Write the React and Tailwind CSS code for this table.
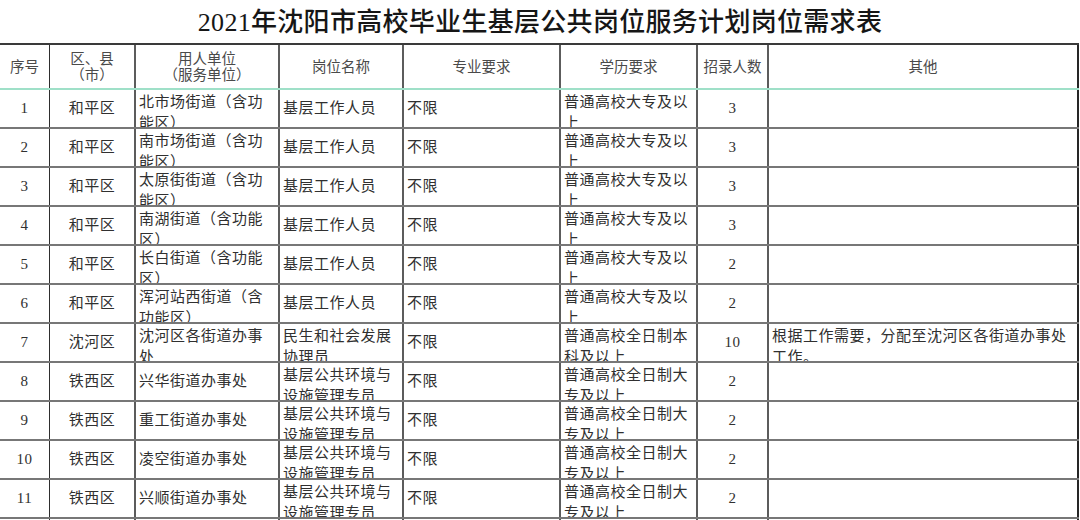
const COLS = 'grid grid-cols-[50px_86px_144px_124px_157px_137px_71px_310px]';
const FONT = "font-['Liberation_Serif','Noto_Sans_CJK_SC',serif]";

const HEAD = [
  ['序号'],
  ['区、县', '（市）'],
  ['用人单位', '（服务单位）'],
  ['岗位名称'],
  ['专业要求'],
  ['学历要求'],
  ['招录人数'],
  ['其他'],
];

const ROWS = [
  ['1', '和平区', ['北市场街道（含功', '能区）'], ['基层工作人员'], ['普通高校大专及以', '上'], '3', []],
  ['2', '和平区', ['南市场街道（含功', '能区）'], ['基层工作人员'], ['普通高校大专及以', '上'], '3', []],
  ['3', '和平区', ['太原街街道（含功', '能区）'], ['基层工作人员'], ['普通高校大专及以', '上'], '3', []],
  ['4', '和平区', ['南湖街道（含功能', '区）'], ['基层工作人员'], ['普通高校大专及以', '上'], '3', []],
  ['5', '和平区', ['长白街道（含功能', '区）'], ['基层工作人员'], ['普通高校大专及以', '上'], '2', []],
  ['6', '和平区', ['浑河站西街道（含', '功能区）'], ['基层工作人员'], ['普通高校大专及以', '上'], '2', []],
  ['7', '沈河区', ['沈河区各街道办事', '处'], ['民生和社会发展', '协理员'], ['普通高校全日制本', '科及以上'], '10', ['根据工作需要，分配至沈河区各街道办事处', '工作。']],
  ['8', '铁西区', ['兴华街道办事处'], ['基层公共环境与', '设施管理专员'], ['普通高校全日制大', '专及以上'], '2', []],
  ['9', '铁西区', ['重工街道办事处'], ['基层公共环境与', '设施管理专员'], ['普通高校全日制大', '专及以上'], '2', []],
  ['10', '铁西区', ['凌空街道办事处'], ['基层公共环境与', '设施管理专员'], ['普通高校全日制大', '专及以上'], '2', []],
  ['11', '铁西区', ['兴顺街道办事处'], ['基层公共环境与', '设施管理专员'], ['普通高校全日制大', '专及以上'], '2', []],
];

function edge(i) {
  if (i === 0) return 'border-r border-r-[#2e2e2e]';
  if (i === 7) return 'border-r-2 border-r-[#262626]';
  return 'border-r-2 border-r-[#5c5c5c]';
}

// excel-style cell: wrapped text is clipped by the row line below
function Cell({ i, lines, center }) {
  const multi = lines.length > 1;
  return (
    <div
      className={`flex overflow-hidden px-[3px] ${edge(i)} ${multi ? 'items-start pt-[2px]' : 'items-center'} ${center ? 'justify-center text-center' : 'justify-start'}`}
    >
      <div className="leading-[21px] tracking-[0.5px] whitespace-nowrap">
        {lines.map((l, k) => (
          <div key={k}>{l}</div>
        ))}
      </div>
    </div>
  );
}

export default function App() {
  return (
    <div className={`h-[520px] w-[1080px] overflow-hidden bg-white text-[#303030] ${FONT}`}>
      <h1 className="flex h-[43px] items-center justify-center pt-[1px] text-[26px] font-medium tracking-[0.3px] text-[#161616]">
        2021年沈阳市高校毕业生基层公共岗位服务计划岗位需求表
      </h1>

      <div className="w-[1079px] border-t-2 border-t-[#3a3a3a]">
        {/* header */}
        <div className={`${COLS} h-[45px] border-b-2 border-b-[#9fe0c8] text-[14.5px] text-[#4a4a4a]`}>
          {HEAD.map((h, i) => (
            <div key={i} className={`flex items-center justify-center text-center leading-[16px] ${edge(i)}`}>
              <div>
                {h.map((l, k) => (
                  <div key={k}>{l}</div>
                ))}
              </div>
            </div>
          ))}
        </div>

        {ROWS.map((r) => (
          <div key={r[0]} className={`${COLS} h-[39px] border-b-2 border-b-[#777] text-[15px]`}>
            <Cell i={0} lines={[r[0]]} center />
            <Cell i={1} lines={[r[1]]} center />
            <Cell i={2} lines={r[2]} />
            <Cell i={3} lines={r[3]} />
            <Cell i={4} lines={['不限']} />
            <Cell i={5} lines={r[4]} />
            <Cell i={6} lines={[r[5]]} center />
            <Cell i={7} lines={r[6]} />
          </div>
        ))}

        {/* next row, cut off by the page edge */}
        <div className={`${COLS} h-[39px]`}>
          {HEAD.map((_, i) => (
            <div key={i} className={edge(i)} />
          ))}
        </div>
      </div>
    </div>
  );
}
